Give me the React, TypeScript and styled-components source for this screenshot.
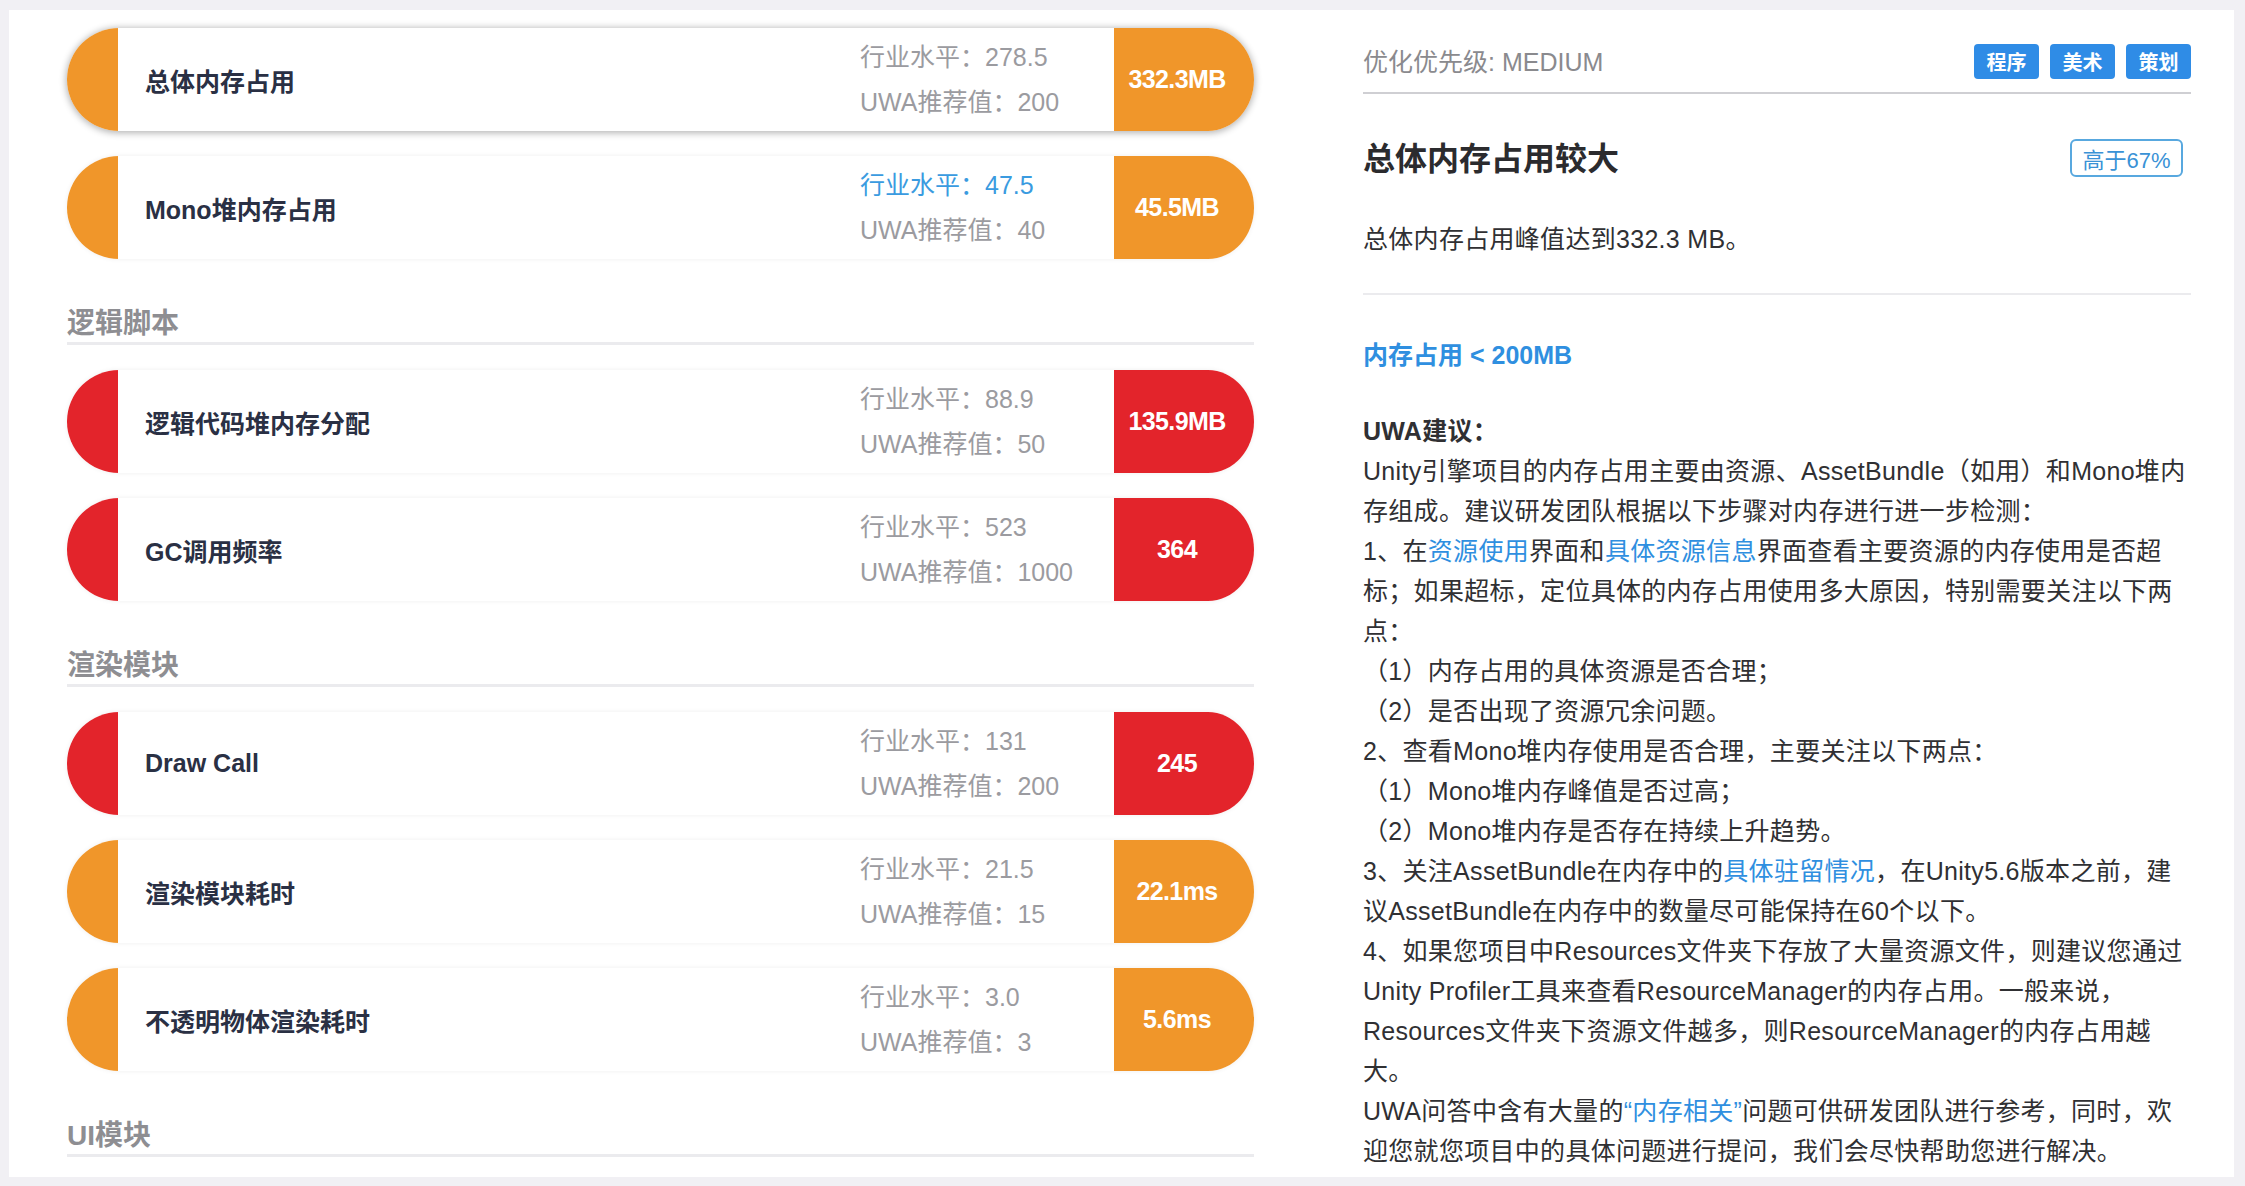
import React from 'react'
import styled, { createGlobalStyle, css } from 'styled-components'

const FONT = `"Liberation Sans", "Noto Sans CJK SC", sans-serif`

const COLORS = {
    warn: '#f0962a',
    bad: '#e3242b',
    blue: '#2f8fe0',
}

const GlobalStyle = createGlobalStyle`
    html, body {
        margin: 0;
        padding: 0;
        background: #f1f0f4;
    }
    body {
        font-family: ${FONT};
        -webkit-font-smoothing: antialiased;
    }
    * {
        box-sizing: border-box;
    }
`

const Page = styled.div`
    padding: 10px 11px 9px 9px;
`

const Panel = styled.div`
    background: #fff;
    min-height: 1167px;
    display: grid;
    grid-template-columns: 1187px 828px;
    column-gap: 109px;
    padding: 18px 43px 0 58px;
`

const LeftColumn = styled.div`
    display: flex;
    flex-direction: column;
    gap: 25px;
`

const SectionTitle = styled.div`
    padding-top: 22px;
    padding-bottom: 0;
    font-size: 28px;
    line-height: 36px;
    font-weight: bold;
    color: #8e8e92;
    border-bottom: 3px solid #ebebee;
`

const Row = styled.div<{ $active?: boolean }>`
    display: flex;
    height: 103px;
    background: #fff;
    border-radius: 52px 46px 46px 52px / 51.5px 51.5px 51.5px 51.5px;
    overflow: hidden;
    ${(p) =>
        p.$active
            ? css`
                  box-shadow: 0 1px 7px 1px rgba(0, 0, 0, 0.3);
              `
            : css`
                  box-shadow: 0 0 5px rgba(0, 0, 0, 0.07);
              `}
`

const Cap = styled.div<{ $color: string }>`
    width: 51px;
    flex-shrink: 0;
    background: ${(p) => p.$color};
`

const RowBody = styled.div`
    flex: 1;
    display: flex;
    align-items: center;
    padding-left: 27px;
`

const Label = styled.div`
    flex: 1;
    font-size: 25px;
    font-weight: bold;
    color: #2a3044;
`

const Metrics = styled.div`
    width: 254px;
    font-size: 25px;
    line-height: 45px;
    color: #9b9ba0;
`

const MetricLine = styled.div<{ $hl?: boolean }>`
    white-space: nowrap;
    color: ${(p) => (p.$hl ? '#3a9be0' : 'inherit')};
`

const ValueBadge = styled.div<{ $color: string }>`
    width: 140px;
    flex-shrink: 0;
    display: flex;
    align-items: center;
    justify-content: center;
    padding-right: 14px;
    background: ${(p) => p.$color};
    color: #fff;
    font-size: 25px;
    font-weight: bold;
    letter-spacing: -0.6px;
`

const RightColumn = styled.div`
    display: flex;
    flex-direction: column;
    color: #303033;
    font-size: 25px;
    letter-spacing: 0.3px;
`

const HeaderRow = styled.div`
    display: flex;
    align-items: center;
    justify-content: space-between;
    padding: 16px 0 13px;
    border-bottom: 2px solid #cfcfd3;
`

const Priority = styled.div`
    color: #8a8a8e;
    font-size: 25px;
    letter-spacing: 0;
    margin-top: -3px;
`

const Tags = styled.div`
    display: flex;
    gap: 11px;
`

const Tag = styled.div`
    width: 65px;
    height: 35px;
    display: flex;
    align-items: center;
    justify-content: center;
    background: #2f8ce6;
    color: #fff;
    font-size: 20px;
    font-weight: bold;
    letter-spacing: 0;
    border-radius: 4px;
`

const TitleRow = styled.div`
    display: flex;
    align-items: center;
    justify-content: space-between;
    margin-top: 45px;
    height: 38px;
`

const Title = styled.h2`
    margin: 0 0 5px;
    font-size: 32px;
    font-weight: bold;
    letter-spacing: 0;
    color: #2b2b2e;
`

const OutlineBadge = styled.div`
    width: 113px;
    height: 38px;
    margin-right: 8px;
    display: flex;
    align-items: center;
    justify-content: center;
    border: 2px solid #58a8df;
    border-radius: 6px;
    color: #3a92d6;
    font-size: 22px;
    letter-spacing: 0;
`

const Desc = styled.div`
    margin-top: 42px;
    line-height: 40px;
    padding-bottom: 34px;
    border-bottom: 2px solid #ebebee;
`

const Target = styled.div`
    margin-top: 40px;
    line-height: 40px;
    font-weight: bold;
    letter-spacing: 0;
    color: ${COLORS.blue};
`

const Advice = styled.div`
    margin-top: 36px;
`

const Line = styled.div<{ $bold?: boolean }>`
    line-height: 40px;
    white-space: nowrap;
    font-weight: ${(p) => (p.$bold ? 'bold' : 'normal')};
`

const Link = styled.span`
    color: ${COLORS.blue};
`

type Item = {
    label: string
    industry: string
    uwa: string
    value: string
    level: 'warn' | 'bad'
    active?: boolean
    hl?: boolean
}

const sections: { title?: string; rows: Item[] }[] = [
    {
        rows: [
            { label: '总体内存占用', industry: '278.5', uwa: '200', value: '332.3MB', level: 'warn', active: true },
            { label: 'Mono堆内存占用', industry: '47.5', uwa: '40', value: '45.5MB', level: 'warn', hl: true },
        ],
    },
    {
        title: '逻辑脚本',
        rows: [
            { label: '逻辑代码堆内存分配', industry: '88.9', uwa: '50', value: '135.9MB', level: 'bad' },
            { label: 'GC调用频率', industry: '523', uwa: '1000', value: '364', level: 'bad' },
        ],
    },
    {
        title: '渲染模块',
        rows: [
            { label: 'Draw Call', industry: '131', uwa: '200', value: '245', level: 'bad' },
            { label: '渲染模块耗时', industry: '21.5', uwa: '15', value: '22.1ms', level: 'warn' },
            { label: '不透明物体渲染耗时', industry: '3.0', uwa: '3', value: '5.6ms', level: 'warn' },
        ],
    },
    { title: 'UI模块', rows: [] },
]

const MetricRow = ({ item }: { item: Item }) => {
    const color = COLORS[item.level]
    return (
        <Row $active={item.active}>
            <Cap $color={color} />
            <RowBody>
                <Label>{item.label}</Label>
                <Metrics>
                    <MetricLine $hl={item.hl}>行业水平：{item.industry}</MetricLine>
                    <MetricLine>UWA推荐值：{item.uwa}</MetricLine>
                </Metrics>
            </RowBody>
            <ValueBadge $color={color}>{item.value}</ValueBadge>
        </Row>
    )
}

export default function App() {
    return (
        <>
            <GlobalStyle />
            <Page>
                <Panel>
                    <LeftColumn>
                        {sections.map((section, si) => (
                            <React.Fragment key={`section-${si}`}>
                                {section.title && <SectionTitle>{section.title}</SectionTitle>}
                                {section.rows.map((item) => (
                                    <MetricRow key={item.label} item={item} />
                                ))}
                            </React.Fragment>
                        ))}
                    </LeftColumn>

                    <RightColumn>
                        <HeaderRow>
                            <Priority>优化优先级: MEDIUM</Priority>
                            <Tags>
                                <Tag>程序</Tag>
                                <Tag>美术</Tag>
                                <Tag>策划</Tag>
                            </Tags>
                        </HeaderRow>
                        <TitleRow>
                            <Title>总体内存占用较大</Title>
                            <OutlineBadge>高于67%</OutlineBadge>
                        </TitleRow>
                        <Desc>总体内存占用峰值达到332.3 MB。</Desc>
                        <Target>内存占用 &lt; 200MB</Target>
                        <Advice>
                            <Line $bold>UWA建议：</Line>
                            <Line>Unity引擎项目的内存占用主要由资源、AssetBundle（如用）和Mono堆内</Line>
                            <Line>存组成。建议研发团队根据以下步骤对内存进行进一步检测：</Line>
                            <Line>
                                1、在<Link>资源使用</Link>界面和<Link>具体资源信息</Link>界面查看主要资源的内存使用是否超
                            </Line>
                            <Line>标；如果超标，定位具体的内存占用使用多大原因，特别需要关注以下两</Line>
                            <Line>点：</Line>
                            <Line>（1）内存占用的具体资源是否合理；</Line>
                            <Line>（2）是否出现了资源冗余问题。</Line>
                            <Line>2、查看Mono堆内存使用是否合理，主要关注以下两点：</Line>
                            <Line>（1）Mono堆内存峰值是否过高；</Line>
                            <Line>（2）Mono堆内存是否存在持续上升趋势。</Line>
                            <Line>
                                3、关注AssetBundle在内存中的<Link>具体驻留情况</Link>，在Unity5.6版本之前，建
                            </Line>
                            <Line>议AssetBundle在内存中的数量尽可能保持在60个以下。</Line>
                            <Line>4、如果您项目中Resources文件夹下存放了大量资源文件，则建议您通过</Line>
                            <Line>Unity Profiler工具来查看ResourceManager的内存占用。一般来说，</Line>
                            <Line>Resources文件夹下资源文件越多，则ResourceManager的内存占用越</Line>
                            <Line>大。</Line>
                            <Line>
                                UWA问答中含有大量的<Link>“内存相关”</Link>问题可供研发团队进行参考，同时，欢
                            </Line>
                            <Line>迎您就您项目中的具体问题进行提问，我们会尽快帮助您进行解决。</Line>
                        </Advice>
                    </RightColumn>
                </Panel>
            </Page>
        </>
    )
}
